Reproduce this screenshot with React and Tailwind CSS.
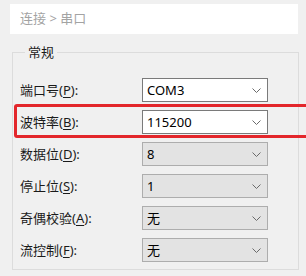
import React from 'react';

const rows = [
  { label: '端口号', key: 'P', value: 'COM3', enabled: true },
  { label: '波特率', key: 'B', value: '115200', enabled: true, marked: true },
  { label: '数据位', key: 'D', value: '8' },
  { label: '停止位', key: 'S', value: '1' },
  { label: '奇偶校验', key: 'A', value: '无' },
  { label: '流控制', key: 'F', value: '无' },
];

function Chevron() {
  return (
    <svg width="9" height="5" viewBox="0 0 9 5" className="shrink-0">
      <path d="M0.5 0.5 L4.5 4.5 L8.5 0.5" fill="none" stroke="#6a6a6a" strokeWidth="1" />
    </svg>
  );
}

function Row({ row }) {
  return (
    <div className="relative flex items-center h-[24px]">
      <span className="w-[122px] text-[13px] leading-[18px] text-[#1a1a1a]">
        {row.label}(<span className="underline underline-offset-2">{row.key}</span>):
      </span>
      <div
        className={
          row.enabled
            ? 'flex items-center justify-between w-[126px] h-[24px] pl-[4px] pr-[6px] bg-white border border-[#7a7a7a]'
            : 'flex items-center justify-between w-[126px] h-[24px] pl-[4px] pr-[6px] bg-[#e3e3e3] border border-[#adadad]'
        }
      >
        <span className="text-[13px] leading-[18px] text-black">{row.value}</span>
        <Chevron />
      </div>
      {row.marked && (
        <div className="absolute -left-[6px] -top-[6px] -right-[16px] -bottom-[4px] border-[3px] border-[#e3262b] rounded-[3px]" />
      )}
    </div>
  );
}

export default function App() {
  return (
    <div
      className="w-[306px] h-[276px] bg-[#f0f0f0] overflow-hidden pt-[4px]"
      style={{ fontFamily: '"Noto Sans", "Noto Sans CJK SC", sans-serif' }}
    >
      <div className="ml-[10px] mr-[8px] h-[30px] bg-white flex items-center pl-[10px] text-[13px] text-[#a3a3a3]">
        连接 &gt; 串口
      </div>

      <fieldset className="mt-[9px] ml-[12px] w-[287px] border border-[#dcdcdc] pl-[7px] pt-[17px] pb-[7px]">
        <legend className="ml-[5px] px-[3px] text-[13px] leading-[18px] text-[#1a1a1a]">常规</legend>
        <div className="flex flex-col gap-[8px]">
          {rows.map((r) => (
            <Row key={r.key} row={r} />
          ))}
        </div>
      </fieldset>
    </div>
  );
}
